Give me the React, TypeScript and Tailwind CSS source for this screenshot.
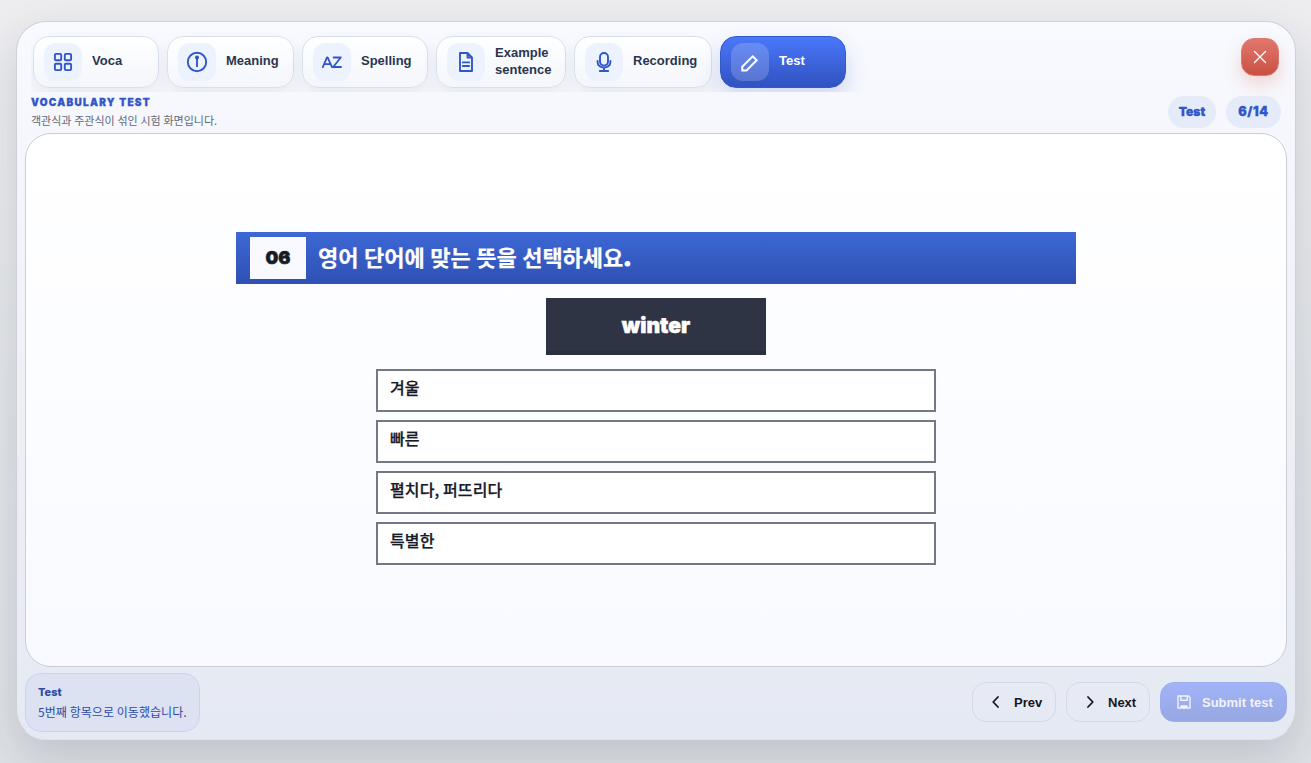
import type { ReactNode } from 'react';

const stroke = {
  fill: 'none',
  stroke: 'currentColor',
  strokeWidth: 2,
  strokeLinecap: 'round' as const,
  strokeLinejoin: 'round' as const,
};

const GridIcon = () => (
  <svg width="24" height="24" viewBox="0 0 24 24" {...stroke} strokeWidth={1.9}>
    <rect x="3.9" y="3.9" width="6.3" height="6.3" rx="1" />
    <rect x="13.8" y="3.9" width="6.3" height="6.3" rx="1" />
    <rect x="3.9" y="13.8" width="6.3" height="6.3" rx="1" />
    <rect x="13.8" y="13.8" width="6.3" height="6.3" rx="1" />
  </svg>
);

const InfoIcon = () => (
  <svg width="24" height="24" viewBox="0 0 24 24" {...stroke} strokeWidth={1.9}>
    <circle cx="12" cy="12" r="9.2" />
    <path d="M12 8v8.2" />
    <circle cx="12" cy="7.5" r="1.1" fill="currentColor" />
  </svg>
);

const LettersIcon = () => (
  <svg width="24" height="24" viewBox="0 0 24 24" {...stroke} strokeWidth={1.8}>
    <path d="M2.8 17.2 7 7.3h.6L12 17.2M4.4 14.2h6M13.6 7.5h7.2L13.2 17h7.8" />
  </svg>
);

const DocumentIcon = () => (
  <svg width="24" height="24" viewBox="0 0 24 24" {...stroke} strokeWidth={1.9}>
    <path d="M6 3h7.5L18 7.5V21H6zM13.5 3v4.5H18M8.8 12.4h6.4M8.8 16h6.4" />
  </svg>
);

const MicIcon = () => (
  <svg width="24" height="24" viewBox="0 0 24 24" {...stroke} strokeWidth={1.9}>
    <rect x="8" y="3" width="8" height="12.6" rx="4" />
    <path d="M5.6 11v1.2a6.4 5.4 0 0 0 12.8 0V11M12 17.4v3.4M7.8 21h8.4" />
  </svg>
);

const PencilIcon = () => (
  <svg width="24" height="24" viewBox="0 0 24 24" {...stroke} strokeWidth={2} strokeLinejoin="miter">
    <path d="M4.3 20.4v-3.7L14.7 6.4l4 3.9L8.5 20.4z" />
  </svg>
);

const SaveIcon = () => (
  <svg width="16" height="16" viewBox="0 0 16 16" {...stroke} strokeWidth={1.4}>
    <path d="M2 2h10.6L14 3.6V14H2zM4.8 2.2v4.1h6.4V2.2M5 13.3h6v-1.3H5z" />
  </svg>
);

interface Tab {
  label: string;
  width: string;
  icon: ReactNode;
  active?: boolean;
  multiline?: boolean;
}

const tabs: Tab[] = [
  { label: 'Voca', width: 'w-[126px]', icon: <GridIcon /> },
  { label: 'Meaning', width: 'w-[127px]', icon: <InfoIcon /> },
  { label: 'Spelling', width: 'w-[126px]', icon: <LettersIcon /> },
  { label: 'Example sentence', width: 'w-[130px]', icon: <DocumentIcon />, multiline: true },
  { label: 'Recording', width: 'w-[138px]', icon: <MicIcon /> },
  { label: 'Test', width: 'w-[126px]', icon: <PencilIcon />, active: true },
];

const options = ['겨울', '빠른', '펼치다, 퍼뜨리다', '특별한'];

function TabButton({ tab }: { tab: Tab }) {
  const look = tab.active
    ? 'border-[#3459c8] bg-linear-to-b from-[#4a78fb] to-[#3152c0] text-white shadow-[0_10px_22px_rgba(49,83,196,0.2)]'
    : 'border-[#d8e0ee] bg-linear-to-b from-white to-[#f3f6fb] text-[#2b3550] shadow-[0_8px_18px_rgba(31,41,55,0.07)]';
  return (
    <button className={`flex h-[52px] shrink-0 items-center gap-[10px] rounded-[16px] border px-[10px] text-left text-[13px] leading-[17px] font-bold ${tab.width} ${look}`}>
      <span
        className={`flex size-[38px] shrink-0 items-center justify-center rounded-[12px] ${
          tab.active ? 'bg-white/18 text-white' : 'bg-[#edf2ff] text-[#3156c8]'
        }`}
      >
        {tab.icon}
      </span>
      <span className={tab.multiline ? 'pb-[2px]' : 'pb-[3px]'}>{tab.label}</span>
    </button>
  );
}

export default function App() {
  return (
    <div className="h-[763px] w-[1311px] overflow-hidden bg-linear-to-b from-[#ededf0] via-[#e3e6ea] to-[#dee1e6] pt-[21px] pr-[15px] pl-4 font-['Liberation_Sans','Noto_Sans_CJK_KR',sans-serif]">
      <main className="flex h-[719px] flex-col overflow-hidden rounded-[30px] border border-[#cfd1d7] border-b-[#dfe2e9] bg-linear-to-b from-[#f8faff] via-[#eff1f6] to-[#e5e9f3] px-2 shadow-[0_18px_44px_rgba(31,41,55,0.16)]">
        <div className="flex h-[70px] shrink-0 justify-between">
          <nav className="ml-[6px] flex w-[900px] gap-2 overflow-hidden pt-[14px] pl-[2px]">
            {tabs.map((tab) => (
              <TabButton key={tab.label} tab={tab} />
            ))}
          </nav>
          <button
            aria-label="Close"
            className="mt-4 mr-2 flex size-[38px] items-center justify-center rounded-[13px] border border-[#da796f] bg-linear-to-b from-[#e0776d] to-[#c95043] text-white shadow-[0_8px_18px_rgba(225,90,80,0.24)]"
          >
            <svg width="14" height="14" viewBox="0 0 14 14" {...stroke} strokeWidth={1.35}>
              <path d="M1.5 1.5 12.5 12.5M12.5 1.5 1.5 12.5" />
            </svg>
          </button>
        </div>

        <header className="flex h-[41px] shrink-0 items-start justify-between pr-[6px] pl-[6px]">
          <div>
            <h1 className="pt-[4px] font-['Inter',sans-serif] text-[10px] leading-[13px] font-black tracking-[1.3px] text-[#3156c8] [-webkit-text-stroke:0.3px_#3156c8]">
              VOCABULARY TEST
            </h1>
            <p className="mt-[3px] font-['Noto_Sans_CJK_KR',sans-serif] text-[11px] leading-[17px] [word-spacing:0.3px] text-[#626776]">객관식과 주관식이 섞인 시험 화면입니다.</p>
          </div>
          <div className="mt-1 flex gap-[10px] font-['Inter',sans-serif] text-[12px] font-black text-[#3156c8] [-webkit-text-stroke:0.3px_#3156c8]">
            <span className="flex h-8 w-12 items-center justify-center rounded-full bg-[#e6ebfa]">Test</span>
            <span className="flex h-8 w-[55px] items-center justify-center rounded-full bg-[#e6ebfa] text-[12.5px] tracking-[0.6px]">6/14</span>
          </div>
        </header>

        <section className="flex h-[534px] shrink-0 flex-col items-center rounded-[26px] border border-[#cacdd4] bg-linear-to-b from-white to-[#f8faff] pt-[98px]">
          <div className="flex h-[52px] w-[840px] items-center gap-3 bg-linear-to-b from-[#3d68d5] to-[#2f50b3] pl-[14px] text-white">
            <span className="flex h-[42px] w-14 items-center justify-center bg-[#f8faff] pb-[2px] font-['Inter',sans-serif] text-[18px] font-black text-[#171b28] [-webkit-text-stroke:0.6px_#171b28]">
              06
            </span>
            <h2 className="pb-[3px] font-['Noto_Sans_CJK_KR',sans-serif] text-[22px] leading-[30px] font-bold [word-spacing:0.5px] [-webkit-text-stroke:0.2px_white]">
              영어 단어에 맞는 뜻을 선택하세요
              <span className="font-['Inter',sans-serif] font-black [-webkit-text-stroke:1.2px_white]">.</span>
            </h2>
          </div>
          <div className="mt-[14px] flex h-[57px] w-[220px] items-center justify-center bg-[#2e3444] pb-[2px] font-['Inter',sans-serif] text-[21px] font-black text-white shadow-[inset_0_-4px_0_#2b3040] [-webkit-text-stroke:0.5px_white]">
            winter
          </div>
          <div className="mt-[14px] flex w-[560px] flex-col gap-2">
            {options.map((option) => (
              <button
                key={option}
                className="flex h-[43px] items-center border-2 border-[#737886] bg-white px-3 pb-[7px] text-left font-['Noto_Sans_CJK_KR',sans-serif] text-[16px] leading-6 font-medium tracking-[0.1px] text-[#171b28] [-webkit-text-stroke:0.25px_#171b28]"
              >
                {option}
              </button>
            ))}
          </div>
        </section>

        <footer className="mt-[6px] flex h-[59px] shrink-0 items-start justify-between">
          <div className="h-[59px] w-[175px] rounded-[16px] border border-[#cad4f2] bg-[#dce2f2] px-3 pt-[10px] text-[#2c4aa5]">
            <p className="font-['Inter',sans-serif] text-[11px] leading-4 font-extrabold">Test</p>
            <p className="mt-[3px] font-['Noto_Sans_CJK_KR',sans-serif] text-[12px] leading-[18px] tracking-[0.05px] whitespace-nowrap">5번째 항목으로 이동했습니다.</p>
          </div>
          <div className="mt-[9px] flex gap-[10px] text-[13px] font-bold text-[#141824]">
            <button className="flex h-10 w-[84px] items-center rounded-[14px] border border-[#d5d9e3] pl-[15px]">
              <svg width="16" height="16" viewBox="0 0 16 16" {...stroke} strokeWidth={1.8}>
                <path d="M10 3 5.2 8l4.8 5" />
              </svg>
              <span className="ml-[10px] pt-[2px]">Prev</span>
            </button>
            <button className="flex h-10 w-[84px] items-center rounded-[14px] border border-[#d5d9e3] pl-[15px]">
              <svg width="16" height="16" viewBox="0 0 16 16" {...stroke} strokeWidth={1.8}>
                <path d="m6 3 4.8 5L6 13" />
              </svg>
              <span className="ml-[10px] pt-[2px]">Next</span>
            </button>
            <button className="flex h-10 w-[127px] items-center rounded-[14px] border border-[#9badeb] bg-linear-to-b from-[#a1b4f8] to-[#97a7e2] pl-[15px] text-[#f0f3fd]">
              <SaveIcon />
              <span className="ml-[10px] pt-[2px] whitespace-nowrap">Submit test</span>
            </button>
          </div>
        </footer>
      </main>
    </div>
  );
}
